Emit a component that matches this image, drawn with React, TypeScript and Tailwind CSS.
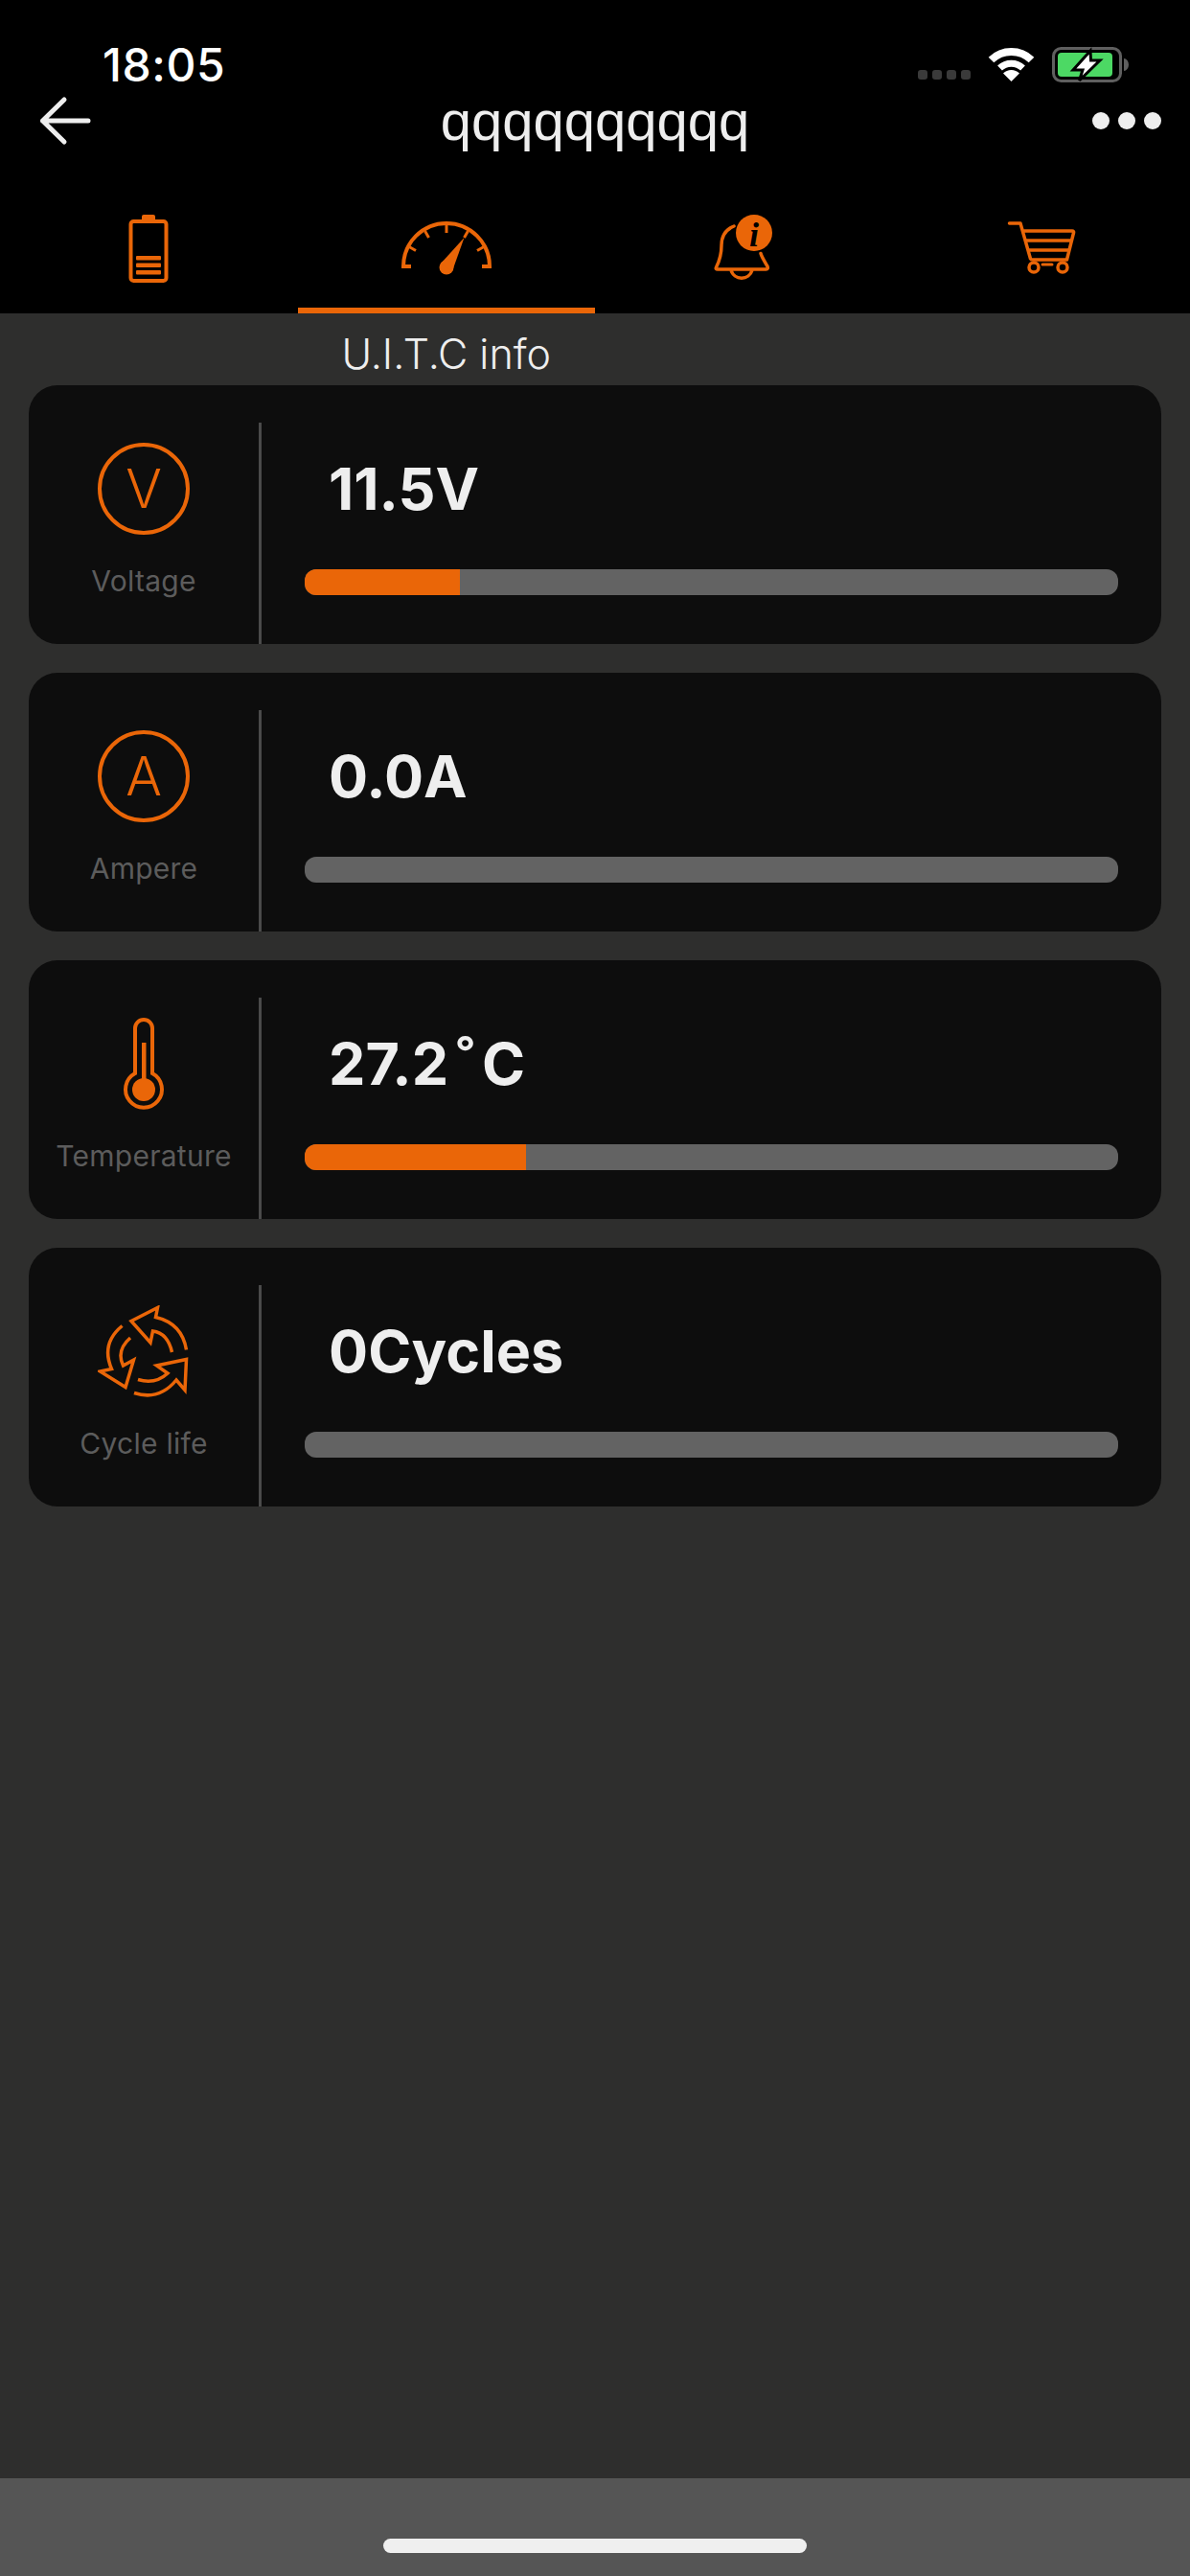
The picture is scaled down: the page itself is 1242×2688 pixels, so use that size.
const ORANGE = '#ea6608';

function BackArrow() {
  return (
    <svg width="60" height="60" viewBox="38 96 60 60" fill="none" stroke="#eeeeee" strokeWidth="5" strokeLinecap="round" strokeLinejoin="round">
      <path d="M67 104 L44.5 126 L67 148 M44.5 126 L92 126" />
    </svg>
  );
}

function Wifi() {
  return (
    <svg width="52" height="40" viewBox="1030 47 52 40" fill="none">
      <path d="M1034.5 62.5 A30 30 0 0 1 1076.5 62.5" stroke="#fff" strokeWidth="8" />
      <path d="M1043.5 71 A17.5 17.5 0 0 1 1067.5 71" stroke="#fff" strokeWidth="7" />
      <path d="M1047 76.5 A12 12 0 0 1 1064 76.5 L1055.5 85 Z" fill="#fff" />
    </svg>
  );
}

function StatusBattery() {
  return (
    <svg width="82" height="42" viewBox="1096 47 82 42" fill="none">
      <rect x="1099.5" y="50.5" width="70" height="34" rx="8" stroke="#5f5f5f" strokeWidth="3" />
      <rect x="1104" y="55" width="57" height="25" rx="4" fill="#4cd964" />
      <path d="M1173 61 A5 6.5 0 0 1 1173 74 Z" fill="#5f5f5f" />
      <path d="M1138 53 L1120 73 L1130 73 L1126.5 84 L1148 63 L1138.5 63 Z" fill="#fff" stroke="#000" strokeWidth="3" strokeLinejoin="miter" />
    </svg>
  );
}

function TabBattery() {
  return (
    <svg width="100" height="80" viewBox="106 220 100 80" fill="none">
      <rect x="137.5" y="231" width="37" height="62" rx="3" stroke={ORANGE} strokeWidth="4" />
      <path d="M149 229 V226 A2 2 0 0 1 151 224 H161 A2 2 0 0 1 163 226 V229 Z" fill={ORANGE} />
      <rect x="143" y="267" width="26" height="4.5" rx="1" fill={ORANGE} />
      <rect x="143" y="274.5" width="26" height="4.5" rx="1" fill={ORANGE} />
      <rect x="143" y="282" width="26" height="4.5" rx="1" fill={ORANGE} />
    </svg>
  );
}

function TabGauge() {
  return (
    <svg width="100" height="80" viewBox="416 220 100 80" fill="none">
      <path d="M429 278 H421 A45 45 0 0 1 511 278 H503" stroke={ORANGE} strokeWidth="4" />
      <path d="M466 235 V243 M443.5 241 L447.5 248 M427 257.5 L434 261.5 M488.5 241 L484.5 248 M505 257.5 L498 261.5" stroke={ORANGE} strokeWidth="3" />
      <circle cx="466" cy="279" r="7.5" fill={ORANGE} />
      <path d="M484.5 248 L472 283 L460 275 Z" fill={ORANGE} />
    </svg>
  );
}

function TabBell() {
  return (
    <svg width="100" height="80" viewBox="726 220 100 80" fill="none">
      <path d="M766 236 C756 240 753 248 753 256 C753 265 751 272 747.5 279 Q746.5 281 749 281 H799.5 Q802 281 801 278 C797.5 272 795 268 794 264.5" stroke={ORANGE} strokeWidth="3.5" strokeLinecap="round" />
      <path d="M763 282 A11.5 11.5 0 0 0 785 282" stroke={ORANGE} strokeWidth="3.5" />
      <ellipse cx="787" cy="243" rx="19" ry="19" fill={ORANGE} />
      <text x="787" y="257" textAnchor="middle" fontFamily="'Liberation Serif', serif" fontStyle="italic" fontWeight="700" fontSize="36" fill="#000">i</text>
    </svg>
  );
}

function TabCart() {
  return (
    <svg width="100" height="80" viewBox="1037 220 100 80" fill="none">
      <path d="M1053.5 233 H1065 L1075.5 270 Q1076 271 1078 271 H1113.5 L1120.5 243 Q1121 241 1119 241 H1067.5" stroke={ORANGE} strokeWidth="3.5" strokeLinecap="round" strokeLinejoin="round" />
      <path d="M1070 251 H1118 M1073 261 H1115.5" stroke={ORANGE} strokeWidth="3.5" />
      <circle cx="1079" cy="279" r="5" stroke={ORANGE} strokeWidth="3.5" />
      <circle cx="1109" cy="279" r="5" stroke={ORANGE} strokeWidth="3.5" />
      <path d="M1088 276 H1098" stroke={ORANGE} strokeWidth="3" strokeLinecap="round" />
    </svg>
  );
}

function CircleLetter({ letter }: { letter: string }) {
  return (
    <div className="flex h-[96px] w-[96px] items-center justify-center rounded-full border-[4px] border-[#ea6608] text-[56px] leading-none font-['Inter',sans-serif] font-light text-[#ea6608]">
      {letter}
    </div>
  );
}

function Thermometer() {
  return (
    <svg width="96" height="96" viewBox="102 1062 96 96" fill="none" stroke={ORANGE} strokeWidth="4">
      <path d="M141 1120 V1073 A9 9 0 0 1 159 1073 V1120 A19 19 0 1 1 141 1120 Z" />
      <circle cx="150" cy="1137" r="12" fill={ORANGE} stroke="none" />
      <rect x="148" y="1088" width="4.5" height="42" fill={ORANGE} stroke="none" />
    </svg>
  );
}

function CycleIcon() {
  return (
    <svg width="96" height="96" viewBox="103 1362 96 96" fill="none" stroke={ORANGE} strokeWidth="3.5" strokeLinejoin="miter">
      <path d="M195.5 1408.5 Q191 1381 163.5 1374.5 L165.5 1364.5 L138 1378.5 L158 1401 L160.5 1389 Q176 1391 180.5 1411" />
      <path d="M128.5 1383.5 Q106 1402 117.5 1428.5 L105.5 1431 L132 1447.5 L140.5 1419 L129.5 1425 Q122 1409 137 1396" />
      <path d="M141 1453.5 Q167 1462 185 1440 L194 1450.5 L195.5 1418.5 L164.5 1425 L176 1433 Q163 1445 145 1439.5" />
    </svg>
  );
}

type Metric = {
  label: string;
  icon: React.ReactNode;
  value: React.ReactNode;
  fill: string;
};

const metrics: Metric[] = [
  { label: 'Voltage', icon: <CircleLetter letter="V" />, value: '11.5V', fill: 'w-[162px]' },
  { label: 'Ampere', icon: <CircleLetter letter="A" />, value: '0.0A', fill: 'w-0' },
  {
    label: 'Temperature',
    icon: <Thermometer />,
    value: (
      <>
        27.2<span className="inline-block w-[35px] text-center">˚</span>C
      </>
    ),
    fill: 'w-[231px]',
  },
  { label: 'Cycle life', icon: <CycleIcon />, value: '0Cycles', fill: 'w-0' },
];

export default function App() {
  return (
    <div className="flex h-[2688px] w-[1242px] flex-col overflow-hidden bg-[#2e2e2d] font-['Liberation_Sans',sans-serif]">
      <header className="bg-black">
        <div className="flex h-[96px] items-start pl-[107px] pr-[64px]">
          <span className="mt-[41px] text-[48px] leading-[54px] font-medium tracking-[0.6px] text-white font-['Inter',sans-serif]">18:05</span>
          <div className="ml-auto mt-[47px] flex items-end">
            <div className="mb-[6px] flex gap-[5px]">
              <span className="h-[10px] w-[10px] rounded-[3px] bg-[#3a3a3a]" />
              <span className="h-[10px] w-[10px] rounded-[3px] bg-[#3a3a3a]" />
              <span className="h-[10px] w-[10px] rounded-[3px] bg-[#3a3a3a]" />
              <span className="h-[10px] w-[10px] rounded-[3px] bg-[#3a3a3a]" />
            </div>
            <div className="ml-[17px] flex items-start">
              <Wifi />
              <div className="ml-[14px]">
                <StatusBattery />
              </div>
            </div>
          </div>
        </div>
        <div className="relative flex h-[60px] items-center justify-between pl-[38px] pr-[30px]">
          <BackArrow />
          <span className="absolute left-0 right-0 top-0 text-center text-[58px] leading-[60px] text-[#eeeeee]">qqqqqqqqqq</span>
          <div className="flex gap-[9px]">
            <span className="h-[18px] w-[18px] rounded-full bg-[#eeeeee]" />
            <span className="h-[18px] w-[18px] rounded-full bg-[#eeeeee]" />
            <span className="h-[18px] w-[18px] rounded-full bg-[#eeeeee]" />
          </div>
        </div>
        <div className="grid h-[171px] grid-cols-4">
          <div className="flex justify-center pt-[64px]"><TabBattery /></div>
          <div className="flex justify-center border-b-[6px] border-[#ea6608] pt-[64px]"><TabGauge /></div>
          <div className="flex justify-center pt-[64px]"><TabBell /></div>
          <div className="flex justify-center pt-[64px]"><TabCart /></div>
        </div>
      </header>

      <main className="flex flex-1 flex-col">
        <div className="grid h-[75px] grid-cols-4">
          <div className="col-start-2 whitespace-nowrap pt-[18px] text-center text-[43px] leading-[48px] text-[#eeeeee] font-['Inter',sans-serif] font-light">
            U.I.T.C info
          </div>
        </div>
        <div className="flex flex-col gap-[30px] px-[30px]">
          {metrics.map((m) => (
            <section key={m.label} className="flex h-[270px] rounded-[30px] bg-[#0d0d0d]">
              <div className="flex w-[240px] flex-col items-center pt-[60px]">
                {m.icon}
                <span className="mt-[31px] whitespace-nowrap text-[30px] leading-[34px] tracking-[0.25px] text-[#5c5c5c] font-['Inter',sans-serif]">{m.label}</span>
              </div>
              <div className="mt-[39px] w-[3px] bg-[#4a4a4a]" />
              <div className="flex flex-1 flex-col pl-[45px] pr-[45px]">
                <div className="pl-[25px] pt-[78px] font-['Inter',sans-serif] text-[61px] leading-[60px] font-bold text-[#eeeeee]">{m.value}</div>
                <div className="mt-[54px] h-[27px] overflow-hidden rounded-[12px] bg-[#636363]">
                  <div className={`h-full bg-[#ea6608] ${m.fill}`} />
                </div>
              </div>
            </section>
          ))}
        </div>
      </main>

      <footer className="flex h-[102px] justify-center bg-[#555555] pt-[63px]">
        <div className="h-[15px] w-[442px] rounded-full bg-[#efefef]" />
      </footer>
    </div>
  );
}
